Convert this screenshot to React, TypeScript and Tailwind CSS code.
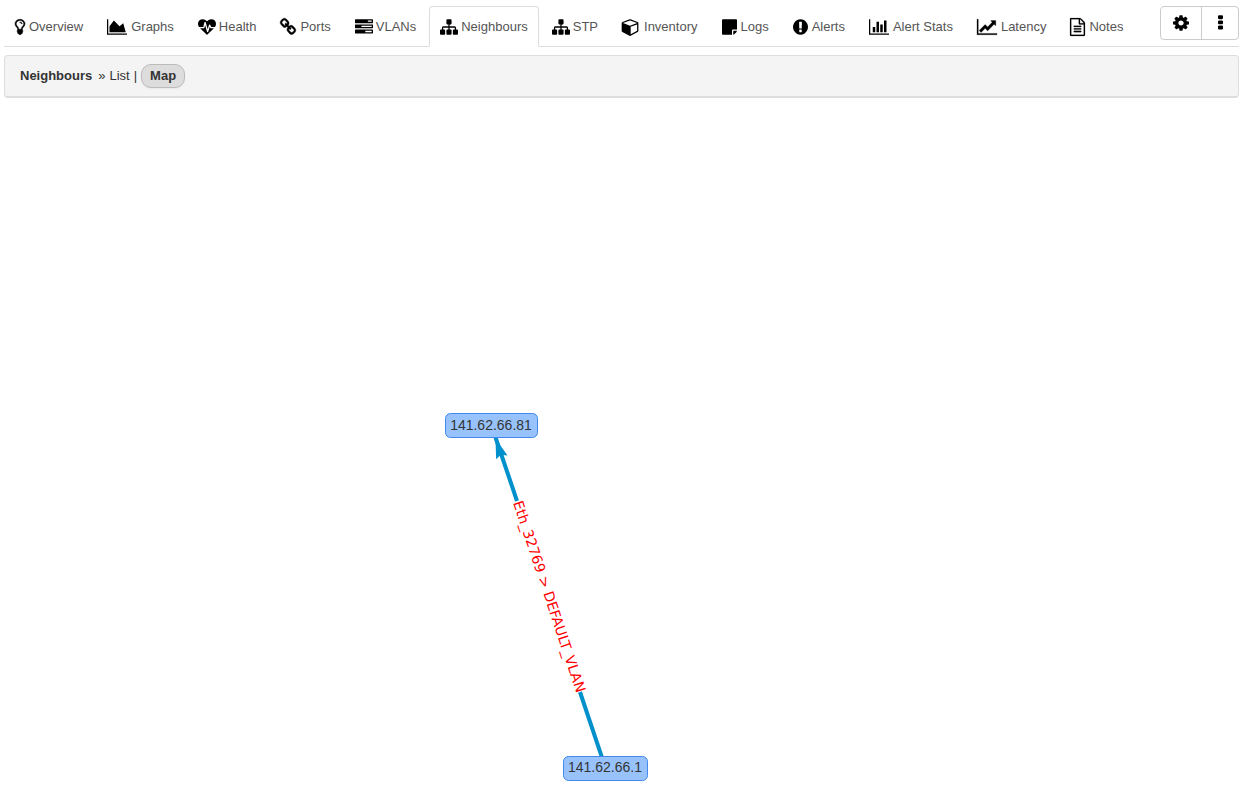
import React from "react";

type Glyph = { width: number; offset?: number; weight?: number; d: string; box: string };

const glyphs = {
  bulb: {
    width: 1024, offset: 384, weight: 50, box: "w-[10px]",
    d: "M1120 576q0 13-9.5 22.5t-22.5 9.5-22.5-9.5-9.5-22.5q0-46-54-71t-106-25q-13 0-22.5-9.5t-9.5-22.5 9.5-22.5 22.5-9.5q50 0 99.5 16t87 54 37.5 90zm160 0q0-72-34.5-134t-90-101.5-123-62-136.5-22.5-136.5 22.5-123 62-90 101.5-34.5 134q0 101 68 180 10 11 30.5 33t30.5 33q128 153 141 298h228q13-145 141-298 10-11 30.5-33t30.5-33q68-79 68-180zm128 0q0 155-103 268-45 49-74.5 87t-59.5 95.5-34 107.5q47 28 47 82 0 37-25 64 25 27 25 64 0 52-45 81 13 23 13 47 0 46-31.5 71t-77.5 25q-20 44-60 70t-87 26-87-26-60-70q-46 0-77.5-25t-31.5-71q0-24 13-47-45-29-45-81 0-37 25-64-25-27-25-64 0-54 47-82-4-50-34-107.5t-59.5-95.5-74.5-87q-103-113-103-268 0-99 44.5-184.5t117-142 164-89 186.5-32.5 186.5 32.5 164 89 117 142 44.5 184.5z",
  },
  area: {
    width: 2048, box: "w-5",
    d: "M2048 1536v128h-2048v-1536h128v1408h1920zm-384-1024l256 896h-1664v-576l448-576 576 576z",
  },
  heartbeat: {
    width: 1792, box: "w-[18px] -mr-px",
    d: "M1280 1024h305q-5 6-10 10.5t-9 7.5l-3 4-623 600q-18 18-44 18t-44-18l-624-602q-5-2-21-20h369q22 0 39.5-13.5t22.5-34.5l70-281 190 667q6 20 23 33t39 13q21 0 38-13t23-33l146-485 56 112q18 35 57 35zm512-428q0 145-103 300h-369l-111-221q-8-17-25.5-27t-36.5-8q-45 5-56 46l-129 430-196-686q-6-20-23.5-33t-39.5-13-39 13.5-22 34.5l-116 464h-423q-103-155-103-300 0-220 127-344t351-124q62 0 126.5 21.5t120 58 95.5 68.5 76 68q36-36 76-68t95.5-68.5 120-58 126.5-21.5q224 0 351 124t127 344z",
  },
  link: {
    width: 1664, offset: 64, weight: 40, box: "w-4",
    d: "M1520 1216q0-40-28-68l-208-208q-28-28-68-28-42 0-72 32 3 3 19 18.5t21.5 21.5 15 19 13 25.5 3.5 27.5q0 40-28 68t-68 28q-15 0-27.5-3.5t-25.5-13-19-15-21.5-21.5-18.5-19q-33 31-33 73 0 40 28 68l206 207q27 27 68 27 40 0 68-26l147-146q28-28 28-67zm-703-705q0-40-28-68l-206-207q-28-28-68-28-39 0-68 27l-147 146q-28 28-28 67 0 40 28 68l208 208q27 27 68 27 42 0 72-31-3-3-19-18.5t-21.5-21.5-15-19-13-25.5-3.5-27.5q0-40 28-68t68-28q15 0 27.5 3.5t25.5 13 19 15 21.5 21.5 18.5 19q33-31 33-73zm895 705q0 120-85 203l-147 146q-83 83-203 83-121 0-204-85l-206-207q-83-83-83-203 0-123 88-209l-88-88q-86 88-208 88-120 0-204-84l-208-208q-84-84-84-204t85-203l147-146q83-83 203-83 121 0 204 85l206 207q83 83 83 203 0 123-88 209l88 88q86-88 208-88 120 0 204 84l208 208q84 84 84 204z",
  },
  tasks: {
    width: 1792, box: "w-[18px] -mr-px",
    d: "M1024 1408h640v-128h-640v128zm-384-512h1024v-128h-1024v128zm640-512h384v-128h-384v128zm512 832v256q0 26-19 45t-45 19h-1664q-26 0-45-19t-19-45v-256q0-26 19-45t45-19h1664q26 0 45 19t19 45zm0-512v256q0 26-19 45t-45 19h-1664q-26 0-45-19t-19-45v-256q0-26 19-45t45-19h1664q26 0 45 19t19 45zm0-512v256q0 26-19 45t-45 19h-1664q-26 0-45-19t-19-45v-256q0-26 19-45t45-19h1664q26 0 45 19t19 45z",
  },
  sitemap: {
    width: 1792, box: "w-[18px] -mr-px",
    d: "M1792 1248v320q0 40-28 68t-68 28h-320q-40 0-68-28t-28-68v-320q0-40 28-68t68-28h96v-192h-512v192h96q40 0 68 28t28 68v320q0 40-28 68t-68 28h-320q-40 0-68-28t-28-68v-320q0-40 28-68t68-28h96v-192h-512v192h96q40 0 68 28t28 68v320q0 40-28 68t-68 28h-320q-40 0-68-28t-28-68v-320q0-40 28-68t68-28h96v-192q0-52 38-90t90-38h512v-192h-96q-40 0-68-28t-28-68v-320q0-40 28-68t68-28h320q40 0 68 28t28 68v320q0 40-28 68t-68 28h-96v192h512q52 0 90 38t38 90v192h96q40 0 68 28t28 68z",
  },
  cube: {
    width: 1792, offset: 32, box: "w-[18px]",
    d: "M896 1629l640-349v-636l-640 233v752zm-64-865l698-254-698-254-698 254zm832-252v768q0 35-18 65t-49 47l-704 384q-28 16-61 16t-61-16l-704-384q-31-17-49-47t-18-65v-768q0-40 23-73t61-47l704-256q22-8 44-8t44 8l704 256q38 14 61 47t23 73z",
  },
  note: {
    width: 1536, box: "w-[15px]",
    d: "M1024 1248v416h-928q-40 0-68-28t-28-68v-1344q0-40 28-68t68-28h1344q40 0 68 28t28 68v928h-416q-40 0-68 28t-28 68zm128 32h381q-15 82-65 132l-184 184q-50 50-132 65v-381z",
  },
  alert: {
    width: 1536, offset: 128, box: "w-[15px]",
    d: "M896 128q209 0 385.5 103t279.5 279.5 103 385.5-103 385.5-279.5 279.5-385.5 103-385.5-103-279.5-279.5-103-385.5 103-385.5 279.5-279.5 385.5-103zm128 1247v-190q0-14-9-23.5t-22-9.5h-192q-13 0-23 10t-10 23v190q0 13 10 23t23 10h192q13 0 22-9.5t9-23.5zm-2-344l18-621q0-12-10-18-10-8-24-8h-220q-14 0-24 8-10 6-10 18l17 621q0 10 10 17.5t24 7.5h185q14 0 23.5-7.5t10.5-17.5z",
  },
  bars: {
    width: 2048, box: "w-5",
    d: "M640 896v512h-256v-512h256zm384-512v1024h-256v-1024h256zm1024 1152v128h-2048v-1536h128v1408h1920zm-640-896v768h-256v-768h256zm384-384v1152h-256v-1152h256z",
  },
  line: {
    width: 2048, weight: 30, box: "w-5",
    d: "M2048 1536v128h-2048v-1536h128v1408h1920zm-128-1248v435q0 21-19.5 29.5t-35.5-7.5l-121-121-633 633q-10 10-23 10t-23-10l-233-233-416 416-192-192 585-585q10-10 23-10t23 10l233 233 464-464-121-121q-16-16-7.5-35.5t29.5-19.5h435q14 0 23 9t9 23z",
  },
  file: {
    width: 1536, offset: 128, weight: 20, box: "w-[15px]",
    d: "M1596 380q28 28 48 76t20 88v1152q0 40-28 68t-68 28h-1344q-40 0-68-28t-28-68v-1600q0-40 28-68t68-28h896q40 0 88 20t76 48zm-444-244v376h376q-10-29-22-41l-313-313q-12-12-41-22zm384 1528v-1024h-416q-40 0-68-28t-28-68v-416h-768v1536h1280zm-1024-864q0-14 9-23t23-9h704q14 0 23 9t9 23v64q0 14-9 23t-23 9h-704q-14 0-23-9t-9-23v-64zm736 224q14 0 23 9t9 23v64q0 14-9 23t-23 9h-704q-14 0-23-9t-9-23v-64q0-14 9-23t23-9h704zm0 256q14 0 23 9t9 23v64q0 14-9 23t-23 9h-704q-14 0-23-9t-9-23v-64q0-14 9-23t23-9h704z",
  },
  cog: {
    width: 1536, offset: 128, box: "w-4",
    d: "M1152 896q0-106-75-181t-181-75-181 75-75 181 75 181 181 75 181-75 75-181zm512-109v222q0 12-8 23t-20 13l-185 28q-19 54-39 91 35 50 107 138 10 12 10 25t-9 23q-27 37-99 108t-94 71q-12 0-26-9l-138-108q-44 23-91 38-16 136-29 186-7 28-36 28h-222q-14 0-24.5-8.5t-11.5-21.5l-28-184q-49-16-90-37l-141 107q-10 9-25 9-14 0-25-11-126-114-165-168-7-10-7-23 0-12 8-23 15-21 51-66.5t54-70.5q-27-50-41-99l-183-27q-13-2-21-12.5t-8-23.5v-222q0-12 8-23t19-13l186-28q14-46 39-92-40-57-107-138-10-12-10-24 0-10 9-23 26-36 98.5-107.5t94.5-71.5q13 0 26 10l138 107q44-23 91-38 16-136 29-186 7-28 36-28h222q14 0 24.5 8.5t11.5 21.5l28 184q49 16 90 37l142-107q9-9 24-9 13 0 25 10 129 119 165 170 7 8 7 22 0 12-8 23-15 21-51 66.5t-54 70.5q26 50 41 98l183 28q13 2 21 12.5t8 23.5z",
  },
  ellipsis: {
    width: 384, offset: 704, box: "w-[5px]",
    d: "M1088 1248v192q0 40-28 68t-68 28h-192q-40 0-68-28t-28-68v-192q0-40 28-68t68-28h192q40 0 68 28t28 68zm0-512v192q0 40-28 68t-68 28h-192q-40 0-68-28t-28-68v-192q0-40 28-68t68-28h192q40 0 68 28t28 68zm0-512v192q0 40-28 68t-68 28h-192q-40 0-68-28t-28-68v-192q0-40 28-68t68-28h192q40 0 68 28t28 68z",
  },
} satisfies Record<string, Glyph>;

type IconName = keyof typeof glyphs;

function Icon({ name }: { name: IconName }) {
  const g: Glyph = glyphs[name];
  return (
    <svg
      aria-hidden="true"
      viewBox={`${g.offset ?? 0} 0 ${g.width} 1792`}
      preserveAspectRatio="none"
      className={`h-[18px] shrink-0 overflow-visible fill-black stroke-black ${g.box}`}
    >
      <path d={g.d} strokeWidth={g.weight ?? 0} />
    </svg>
  );
}

const tabs: { icon: IconName; label: string; active?: boolean }[] = [
  { icon: "bulb", label: "Overview" },
  { icon: "area", label: "Graphs" },
  { icon: "heartbeat", label: "Health" },
  { icon: "link", label: "Ports" },
  { icon: "tasks", label: "VLANs" },
  { icon: "sitemap", label: "Neighbours", active: true },
  { icon: "sitemap", label: "STP" },
  { icon: "cube", label: "Inventory" },
  { icon: "note", label: "Logs" },
  { icon: "alert", label: "Alerts" },
  { icon: "bars", label: "Alert Stats" },
  { icon: "line", label: "Latency" },
  { icon: "file", label: "Notes" },
];

function DeviceTabs() {
  return (
    <div className="flex items-start justify-between border-b border-[#ddd]">
      <nav className="-mb-px flex gap-0.5">
        {tabs.map((tab) => (
          <a
            key={tab.label}
            href="#"
            aria-current={tab.active ? "page" : undefined}
            className={`flex h-[41px] items-center gap-1 rounded-t-sm border px-2.5 whitespace-nowrap text-[#555] ${
              tab.active ? "border-[#ddd] border-b-white bg-white" : "border-transparent"
            }`}
          >
            <Icon name={tab.icon} />
            {tab.label}
          </a>
        ))}
      </nav>
      <div className="flex h-[34px] rounded-sm border border-[#ccc]">
        <button aria-label="Edit device" className="flex w-[41px] items-center justify-center border-r border-[#ccc]">
          <Icon name="cog" />
        </button>
        <button aria-label="More actions" className="flex w-9 items-center justify-center">
          <Icon name="ellipsis" />
        </button>
      </div>
    </div>
  );
}

function ViewBar() {
  return (
    <div className="mt-2 flex h-[43px] items-center gap-1 rounded-sm border border-b-2 border-[#ddd] bg-[#f4f4f4] px-[15px] text-[#333]">
      <strong className="mr-0.5">Neighbours</strong>
      <span>»</span>
      <a href="#">List</a>
      <span>|</span>
      <a
        href="#"
        aria-current="true"
        className="rounded-[10px] border border-[#bbb] bg-[#ddd] px-2 py-px leading-5 font-bold shadow-xs"
      >
        Map
      </a>
    </div>
  );
}

function NeighbourMap() {
  return (
    <svg
      role="img"
      aria-label="Neighbour map"
      className="block h-[700px] w-full"
    >
      <g stroke="#0090cc" strokeWidth="4">
        <line x1="487.5" y1="327.5" x2="513" y2="403" />
        <line x1="576" y1="594" x2="601.5" y2="670" />
      </g>
      <path d="M0 0L-20 6L-17 0L-20 -6Z" transform="translate(491.5 340.5) rotate(-108.4)" fill="#0090cc" />
      <g fill="#97c2fc" stroke="#4189ec">
        <rect x="441.5" y="315.5" width="92" height="24" rx="5" />
        <rect x="559.5" y="658.5" width="84" height="24" rx="5" />
      </g>
      <g fill="#343434" fontFamily="Liberation Sans, Arial, sans-serif" fontSize="14" textAnchor="middle">
        <text x="487" y="332">141.62.66.81</text>
        <text x="601" y="674">141.62.66.1</text>
      </g>
      <text
        transform="translate(545.5 498.5) rotate(71.6)"
        y="5"
        fill="#ff0000"
        fontFamily="DejaVu Sans, sans-serif"
        fontSize="14"
        textAnchor="middle"
      >
        {"Eth_32769 > DEFAULT_VLAN"}
      </text>
    </svg>
  );
}

export default function App() {
  return (
    <main className="bg-white pt-1.5 pr-[11px] pl-1 font-['Liberation_Sans',Arial,sans-serif] text-[13px] leading-[18px]">
      <DeviceTabs />
      <ViewBar />
      <NeighbourMap />
    </main>
  );
}
